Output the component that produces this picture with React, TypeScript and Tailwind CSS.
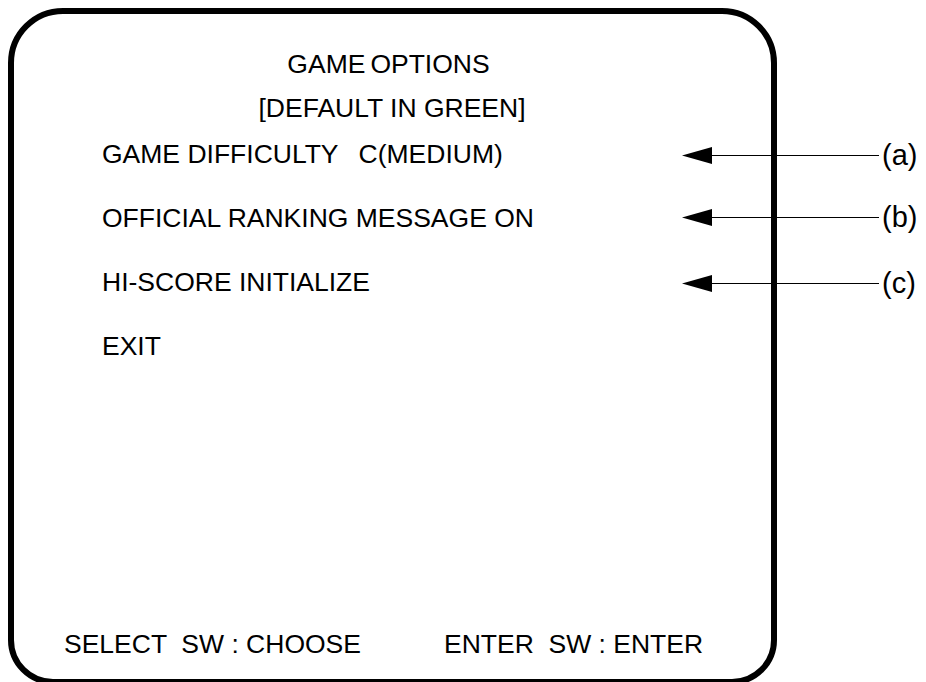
import React from "react";

function Annotation({ y, label }: { y: number; label: string }) {
  return (
    <div
      className="absolute left-[682px] h-[40px] flex items-center"
      style={{ top: y - 20 }}
    >
      <svg width="197" height="19" viewBox="0 0 197 19" className="block">
        <polygon points="0,9.5 30,1 30,18" fill="#000" />
        <rect x="29" y="9" width="168" height="1" fill="#000" />
      </svg>
      <span className="ml-[3px] text-[29px] leading-[40px]">{label}</span>
    </div>
  );
}

export default function App() {
  return (
    <div className="relative w-[926px] h-[682px] bg-white overflow-hidden text-black font-['Liberation_Sans',Arial,sans-serif]">
      <div className="ml-[8px] mt-[8px] w-[769px] h-[677px] border-[6px] border-black rounded-t-[55px] rounded-b-[45px] flex flex-col">
        <div className="pt-[28px] text-[26.5px] leading-[44px] text-center">
          <div className="pr-[8px]">
            GAME<span className="ml-[5px]">OPTIONS</span>
          </div>
          <div className="pr-[1px]">[DEFAULT IN GREEN]</div>
        </div>
        <div className="pl-[88px] flex flex-col gap-[16px] text-[26.5px] leading-[48px]">
          <div>
            GAME DIFFICULTY<span className="ml-[20px]">C(MEDIUM)</span>
          </div>
          <div>OFFICIAL RANKING MESSAGE ON</div>
          <div>HI-SCORE INITIALIZE</div>
          <div>EXIT</div>
        </div>
        <div className="mt-auto pb-[15px] pl-[50px] text-[26.5px] leading-[40px] whitespace-pre">
          SELECT  SW : CHOOSE
          <span className="ml-[83px]">ENTER  SW : ENTER</span>
        </div>
      </div>
      <Annotation y={155} label="(a)" />
      <Annotation y={217} label="(b)" />
      <Annotation y={283} label="(c)" />
    </div>
  );
}
